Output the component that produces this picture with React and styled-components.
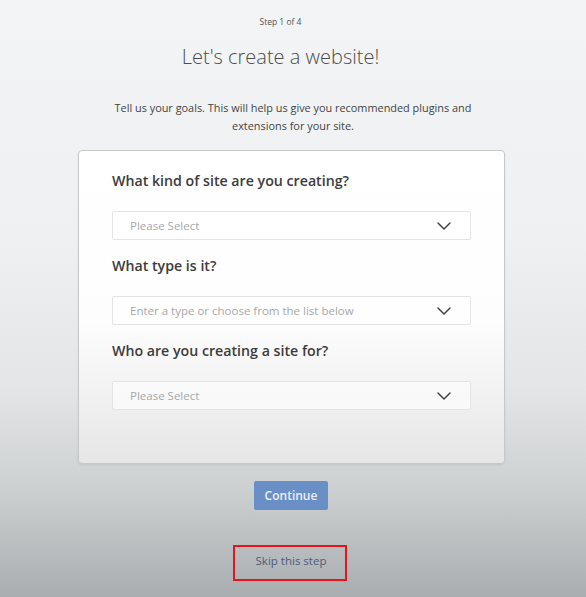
import React from "react";
import styled, { createGlobalStyle } from "styled-components";

const GlobalStyle = createGlobalStyle`
  html, body {
    margin: 0;
    padding: 0;
  }
  body {
    font-family: "Open Sans", "Liberation Sans", sans-serif;
    background: #a9acae;
  }
`;

const questions = [
  { label: "What kind of site are you creating?", placeholder: "Please Select" },
  { label: "What type is it?", placeholder: "Enter a type or choose from the list below" },
  { label: "Who are you creating a site for?", placeholder: "Please Select" },
];

const Chevron = () => (
  <svg width="14" height="8" viewBox="0 0 14 8" fill="none">
    <path d="M1 1l6 6 6-6" stroke="#444" strokeWidth="1.5" strokeLinecap="round" strokeLinejoin="round" />
  </svg>
);

export default function App() {
  return (
    <>
      <GlobalStyle />
      <Page>
        <StepText>Step 1 of 4</StepText>
        <Heading>Let's create a website!</Heading>
        <Intro>
          Tell us your goals. This will help us give you recommended plugins and
          extensions for your site.
        </Intro>
        <FormCard>
          {questions.map((q) => (
            <Field key={q.label}>
              <FieldLabel>{q.label}</FieldLabel>
              <SelectBox>
                <Placeholder>{q.placeholder}</Placeholder>
                <Chevron />
              </SelectBox>
            </Field>
          ))}
        </FormCard>
        <ContinueButton>Continue</ContinueButton>
        <SkipBox>
          <SkipLink>Skip this step</SkipLink>
        </SkipBox>
      </Page>
    </>
  );
}

const Page = styled.div`
  min-height: 597px;
  box-sizing: border-box;
  display: flex;
  flex-direction: column;
  align-items: center;
  padding-top: 16px;
  background: linear-gradient(
    to bottom,
    #f2f4f5 0%,
    #eef0f1 40%,
    #e3e5e6 65%,
    #cdd0d1 82%,
    #aaadaf 100%
  );
`;

const StepText = styled.div`
  font-size: 8.5px;
  line-height: 12px;
  color: #555;
  margin-right: 25px;
`;

const Heading = styled.h1`
  margin: 15px 25px 0 0;
  font-size: 20px;
  line-height: 28px;
  font-weight: 300;
  color: #4d4d4d;
`;

const Intro = styled.p`
  margin: 28px 0 0;
  width: 380px;
  text-align: center;
  font-size: 10.9px;
  line-height: 18px;
  color: #444;
`;

const FormCard = styled.div`
  margin: 15px 3px 0 0;
  width: 427px;
  height: 314px;
  box-sizing: border-box;
  padding: 20px 33px 0;
  border: 1px solid #c6c8c9;
  border-radius: 4px;
  background: linear-gradient(to bottom, #ffffff 0%, #fdfdfd 55%, #e6e6e6 100%);
  box-shadow: 0 1px 2px rgba(0, 0, 0, 0.08);
  display: flex;
  flex-direction: column;
  gap: 16px;
`;

const Field = styled.div`
  display: flex;
  flex-direction: column;
  gap: 20px;
`;

const FieldLabel = styled.div`
  font-size: 14.2px;
  line-height: 20px;
  font-weight: 600;
  color: #3c3c3c;
`;

const SelectBox = styled.div`
  height: 29px;
  box-sizing: border-box;
  border: 1px solid #e4e4e4;
  border-radius: 2px;
  background: rgba(255, 255, 255, 0.6);
  display: flex;
  align-items: center;
  justify-content: space-between;
  padding: 0 19px 0 17px;
`;

const Placeholder = styled.span`
  font-size: 11.5px;
  color: #a8a8a8;
`;

const ContinueButton = styled.button`
  margin: 17px 4px 0 0;
  width: 74px;
  height: 29px;
  border: none;
  border-radius: 2px;
  background: #6a8fc6;
  color: #e9eef7;
  font-family: inherit;
  font-size: 12px;
  font-weight: 600;
`;

const SkipBox = styled.div`
  margin: 35px 6px 0 0;
  width: 114px;
  height: 36px;
  box-sizing: border-box;
  border: 2px solid #e8141b;
  padding: 0 0 6px 2px;
  display: flex;
  align-items: center;
  justify-content: center;
`;

const SkipLink = styled.span`
  font-size: 11.5px;
  color: #4d5c7a;
`;
